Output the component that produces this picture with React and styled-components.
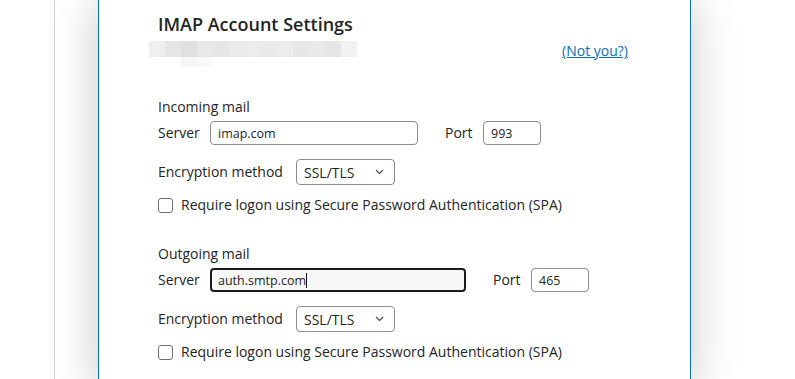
import styled, { createGlobalStyle } from "styled-components";

const GlobalStyle = createGlobalStyle`
    html, body {
        margin: 0;
        padding: 0;
        background: #ffffff;
    }
    body {
        font-family: "Open Sans", "Noto Sans", sans-serif;
        color: #242424;
    }
`;

const blurShades = ["#efefef", "#e5e5e5", "#e0e0e0", "#e8e8e8", "#e6e6e6", "#ebebeb", "#ececec", "#e9e9e9", "#ececec", "#e7e7e7", "#e9e9e9", "#e5e5e5", "#f2f2f2"];

const Field = ({ width, value, focused }) => (
    <Input $width={width} $focused={focused}>
        {value}
        {focused && <Caret />}
    </Input>
);

const Checkbox = ({ label }) => (
    <CheckRow>
        <Box />
        <span>{label}</span>
    </CheckRow>
);

const MailSection = ({ title, server, serverWidth, port, focused }) => (
    <Section>
        <SectionTitle>{title}</SectionTitle>
        <Row>
            <Label $width={52}>Server</Label>
            <Field width={serverWidth} value={server} focused={focused} />
            <PortLabel>Port</PortLabel>
            <Field width={58} value={port} />
        </Row>
        <Row $top={14}>
            <Label $width={138}>Encryption method</Label>
            <Select>
                SSL/TLS
                <svg width="9" height="6" viewBox="0 0 9 6">
                    <path d="M1 1l3.5 3.5L8 1" fill="none" stroke="#444" strokeWidth="1.1" />
                </svg>
            </Select>
        </Row>
        <Checkbox label="Require logon using Secure Password Authentication (SPA)" />
    </Section>
);

const App = () => {
    return (
        <>
            <GlobalStyle />
            <Page>
                <Surface>
                    <Dialog>
                        <Title>IMAP Account Settings</Title>
                        <AccountRow>
                            <Blurred>
                                <BlurLine>
                                    {blurShades.map((s, i) => (
                                        <Block key={i} $shade={s} />
                                    ))}
                                </BlurLine>
                                <BlurLine $indent={32}>
                                    <Block $shade="#f5f5f5" $short />
                                    <Block $shade="#f9f9f9" $short />
                                </BlurLine>
                            </Blurred>
                            <NotYou href="#">(Not you?)</NotYou>
                        </AccountRow>
                        <MailSection title="Incoming mail" server="imap.com" serverWidth={208} port="993" />
                        <MailSection title="Outgoing mail" server="auth.smtp.com" serverWidth={256} port="465" focused />
                    </Dialog>
                </Surface>
            </Page>
        </>
    );
};

export default App;

const Page = styled.div`
    display: flex;
    height: 379px;
    overflow: hidden;
    padding-left: 54px;
`;

const Surface = styled.div`
    flex: 1;
    display: flex;
    border-left: 1px solid #cfcfcf;
    padding-left: 43px;
`;

const Dialog = styled.div`
    width: 532px;
    height: 100%;
    background: #ffffff;
    border-left: 1px solid #0f6cbd;
    border-right: 1px solid #0f6cbd;
    box-shadow: 0 0 44px rgba(0, 0, 0, 0.22);
    padding: 12px 0 0 59px;
    display: flex;
    flex-direction: column;
`;

const Title = styled.div`
    font-size: 18px;
    font-weight: 600;
    line-height: 24px;
    color: #242424;
`;

const AccountRow = styled.div`
    display: flex;
    justify-content: space-between;
    align-items: flex-start;
    margin-top: 5px;
    margin-left: -9px;
    height: 58px;
`;

const Blurred = styled.div`
    display: flex;
    flex-direction: column;
`;

const BlurLine = styled.div`
    display: flex;
    margin-left: ${p => p.$indent || 0}px;
`;

const Block = styled.div`
    width: 16px;
    height: ${p => (p.$short ? 10 : 16)}px;
    background: ${p => p.$shade};
`;

const NotYou = styled.a`
    font-size: 14px;
    line-height: 20px;
    color: #0f6cbd;
    text-decoration: underline;
    margin-right: 62px;
`;

const Section = styled.div`
    display: flex;
    flex-direction: column;
    margin-bottom: 29px;
`;

const SectionTitle = styled.div`
    font-size: 14px;
    line-height: 20px;
    margin-bottom: 4px;
`;

const Row = styled.div`
    display: flex;
    align-items: center;
    margin-top: ${p => p.$top || 0}px;
`;

const Label = styled.span`
    width: ${p => p.$width}px;
    font-size: 14px;
    line-height: 20px;
`;

const PortLabel = styled.span`
    font-size: 14px;
    line-height: 20px;
    margin: 0 10px 0 27px;
    width: 28px;
`;

const Input = styled.div`
    box-sizing: border-box;
    width: ${p => p.$width}px;
    height: 24px;
    display: flex;
    align-items: center;
    padding-left: ${p => (p.$focused ? 6 : 7)}px;
    font-size: 12.5px;
    color: #242424;
    background: ${p => (p.$focused ? "#f7f7f7" : "#ffffff")};
    border: ${p => (p.$focused ? "2px solid #1b1b1b" : "1px solid #8d8d8d")};
    border-radius: 4px;
`;

const Caret = styled.span`
    width: 1px;
    height: 15px;
    background: #111;
`;

const Select = styled.div`
    box-sizing: border-box;
    width: 99px;
    height: 26px;
    display: flex;
    align-items: center;
    justify-content: space-between;
    padding: 0 10px 0 7px;
    font-size: 14px;
    border: 1px solid #8d8d8d;
    border-radius: 4px;
`;

const CheckRow = styled.label`
    display: flex;
    align-items: center;
    gap: 8px;
    margin-top: 10px;
    font-size: 14px;
    line-height: 20px;
`;

const Box = styled.span`
    box-sizing: border-box;
    width: 15px;
    height: 15px;
    border: 1px solid #6e6e6e;
    border-radius: 3px;
    background: #fff;
`;
